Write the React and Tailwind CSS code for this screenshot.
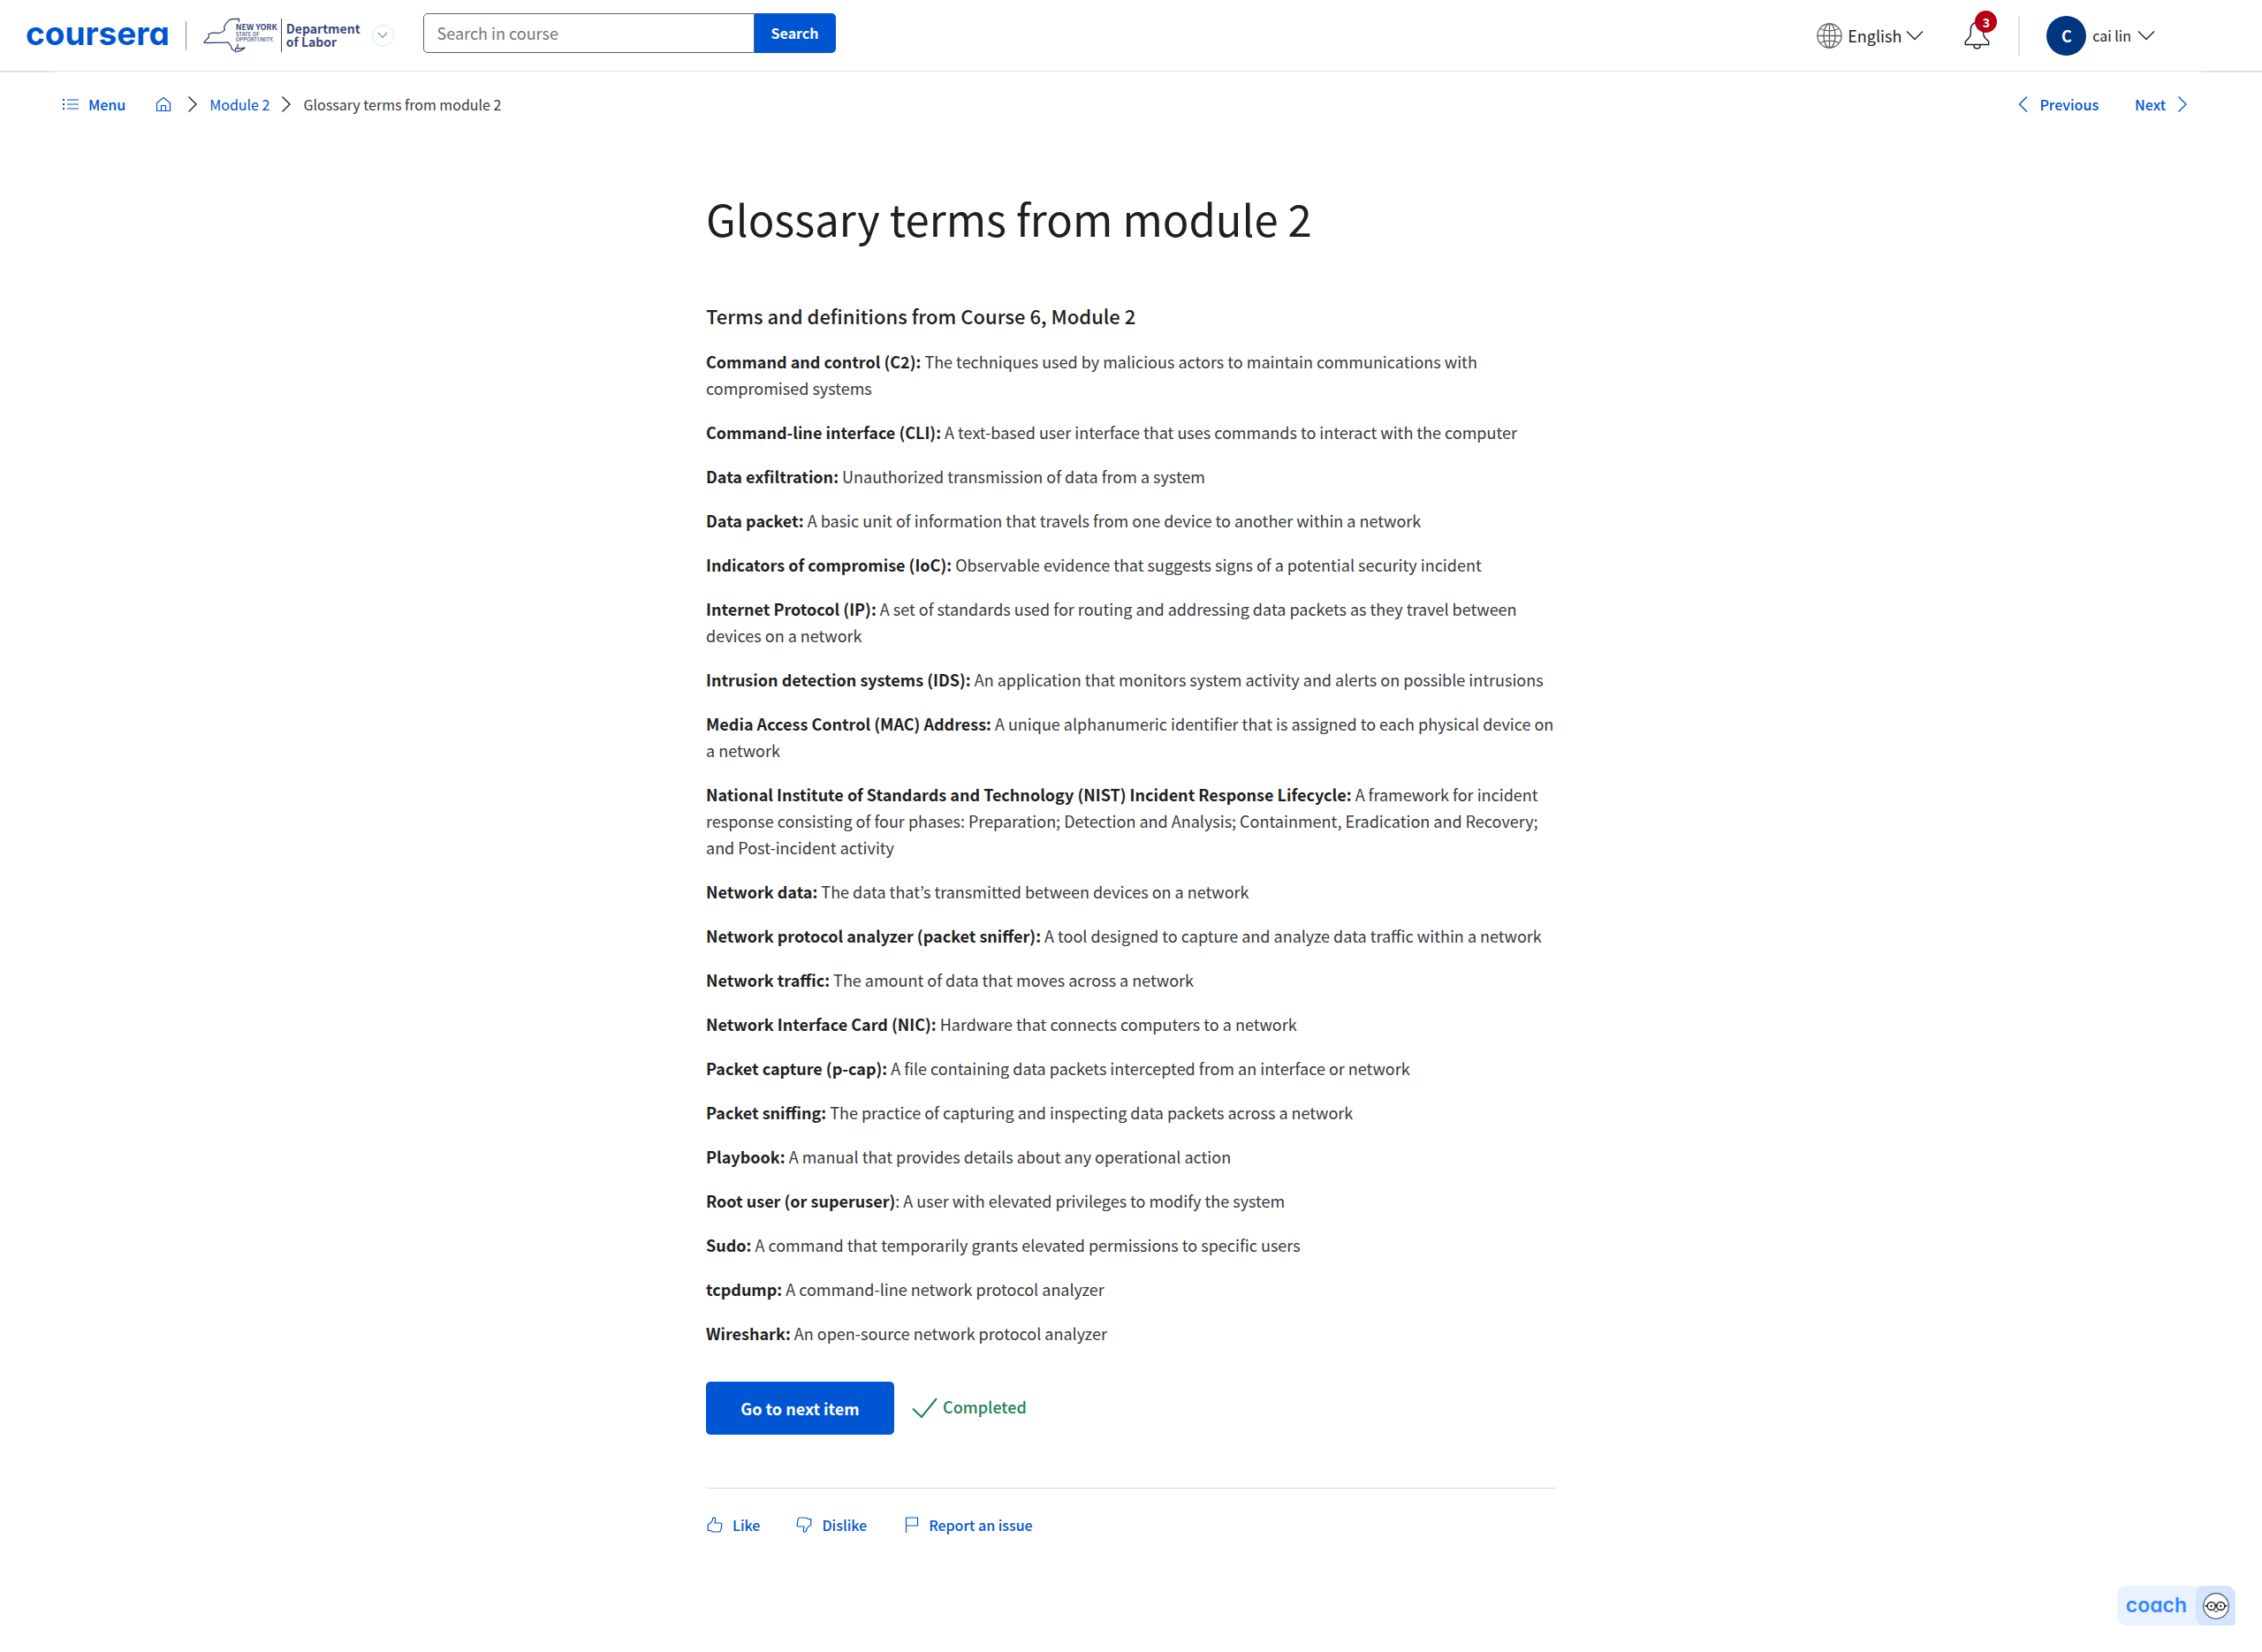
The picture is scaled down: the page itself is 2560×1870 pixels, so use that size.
const terms = [
  ["Command and control (C2):", "The techniques used by malicious actors to maintain communications with compromised systems"],
  ["Command-line interface (CLI):", "A text-based user interface that uses commands to interact with the computer"],
  ["Data exfiltration:", "Unauthorized transmission of data from a system"],
  ["Data packet:", "A basic unit of information that travels from one device to another within a network"],
  ["Indicators of compromise (IoC):", "Observable evidence that suggests signs of a potential security incident"],
  ["Internet Protocol (IP):", "A set of standards used for routing and addressing data packets as they travel between devices on a network"],
  ["Intrusion detection systems (IDS):", "An application that monitors system activity and alerts on possible intrusions"],
  ["Media Access Control (MAC) Address:", "A unique alphanumeric identifier that is assigned to each physical device on a network"],
  ["National Institute of Standards and Technology (NIST) Incident Response Lifecycle:", "A framework for incident response consisting of four phases: Preparation; Detection and Analysis; Containment, Eradication and Recovery; and Post-incident activity"],
  ["Network data:", "The data that’s transmitted between devices on a network"],
  ["Network protocol analyzer (packet sniffer):", "A tool designed to capture and analyze data traffic within a network"],
  ["Network traffic:", "The amount of data that moves across a network"],
  ["Network Interface Card (NIC):", "Hardware that connects computers to a network"],
  ["Packet capture (p-cap):", "A file containing data packets intercepted from an interface or network"],
  ["Packet sniffing:", "The practice of capturing and inspecting data packets across a network"],
  ["Playbook:", "A manual that provides details about any operational action"],
  ["Root user (or superuser)", "A user with elevated privileges to modify the system", ":"],
  ["Sudo:", "A command that temporarily grants elevated permissions to specific users"],
  ["tcpdump:", "A command-line network protocol analyzer"],
  ["Wireshark:", "An open-source network protocol analyzer"],
];

const line = { fill: "none", stroke: "currentColor" };

function ChevronRight({ className }) {
  return (
    <svg className={className} width="12" height="20" viewBox="0 0 12 20" aria-hidden="true">
      <path d="M1.500 1.500 10 10l-8.500 8.500" {...line} strokeWidth="1.400" />
    </svg>
  );
}

function ChevronLeft() {
  return (
    <svg width="12" height="20" viewBox="0 0 12 20" aria-hidden="true">
      <path d="M10 1.500 1.500 10l8.500 8.500" {...line} strokeWidth="1.400" />
    </svg>
  );
}

function ChevronDown() {
  return (
    <svg width="20" height="12" viewBox="0 0 20 12" aria-hidden="true">
      <path d="M1 1.500 10 10.500 19 1.500" {...line} strokeWidth="1.400" />
    </svg>
  );
}

function StateLogo() {
  return (
    <a href="#labor" aria-label="New York State Department of Labor" className="flex h-10 items-center text-[#3b4a78]">
      <span className="relative block h-10 w-[86px]">
        <svg className="absolute inset-0" width="86" height="40" viewBox="0 0 86 40" aria-hidden="true">
          <path
            d="M41.500 5V1.500H34l-3 .8-4 4-2.500 4.200 1 3-2.500 2.500-5 1.500-7-.3-4 1.800.5 3-4.500 4.500-1 1.500 2 .5 25-.5 3 3.500 1.500 4 3 2M40 29.500v5M37 38l1-3.500 4.500.5 6-1-5 3.300-6.500 1.500"
            {...line}
            strokeWidth="1.300"
          />
        </svg>
        <span className="absolute top-[6px] left-[38px] flex flex-col whitespace-nowrap">
          <span className="text-[9px] leading-[10px] font-bold">NEW YORK</span>
          <span className="text-[6px] leading-[6px] font-medium">STATE OF</span>
          <span className="text-[6px] leading-[6px] font-medium">OPPORTUNITY.</span>
        </span>
      </span>
      <span className="ml-[3px] h-[38px] w-px bg-[#3b4a78]" />
      <span className="ml-[5px] text-[14px] leading-[15px] font-bold">
        Department
        <br />
        of Labor
      </span>
    </a>
  );
}

function Header() {
  return (
    <header className="flex h-[81px] items-center border-b border-[#e1e1e1] pr-[121px] pl-[29px]">
      <a href="#home" className="flex h-full items-center pb-1 font-['Inter',sans-serif] text-[37px] leading-10 font-bold text-[#0056d2] [font-feature-settings:'cv11']">
        coursera
      </a>
      <span className="ml-[18px] h-[33px] w-px bg-[#8a8a8a]" />
      <div className="ml-[18px]">
        <StateLogo />
      </div>
      <button type="button" aria-label="Switch program" className="ml-[13px] flex size-[25px] items-center justify-center rounded-full border border-[#e1e1e1] text-[#0056d2]">
        <svg width="12" height="8" viewBox="0 0 12 8" aria-hidden="true">
          <path d="M1 1 6 6.500 11 1" {...line} />
        </svg>
      </button>
      <form className="mb-[5px] ml-[33px] flex h-[45px]" onSubmit={(e) => e.preventDefault()}>
        <input
          type="text"
          aria-label="Search in course"
          placeholder="Search in course"
          className="w-[375px] rounded-l-[5px] border border-[#636363] px-[15px] text-[18px] text-[#1f1f1f] placeholder:text-[#757575]"
        />
        <button type="submit" className="w-[92px] rounded-r-[5px] bg-[#0056d2] pb-0.5 text-[16px] font-bold text-white">
          Search
        </button>
      </form>

      <div className="ml-auto flex h-full items-center text-[#1f1f1f]">
        <button type="button" className="flex items-center text-[18px]">
          <svg className="text-[#636363]" width="29" height="29" viewBox="0 0 29 29" aria-hidden="true">
            <g {...line} strokeWidth="1.300">
              <circle cx="14.500" cy="14.500" r="13.600" />
              <ellipse cx="14.500" cy="14.500" rx="6.500" ry="13.600" />
              <path d="M1 14.500h27M14.500 1v27M4 6.500c3 1.700 6.500 2.400 10.500 2.400S22 8.200 25 6.500M4 22.500c3-1.700 6.500-2.400 10.500-2.400s7.500.7 10.500 2.400" />
            </g>
          </svg>
          <span className="mr-[5px] ml-1.5">English</span>
          <ChevronDown />
        </button>
        <button type="button" aria-label="Notifications, 3 unread" className="relative ml-[46px]">
          <svg width="29" height="32" viewBox="0 0 29 32" aria-hidden="true">
            <path
              d="M1.300 26.500v-3.500l4-4c1.200-1.300 2-3 2-5V9c0-4 3-7.500 7.200-7.500S21.700 5 21.700 9v5c0 2 .8 3.700 2 5l4 4v3.500ZM10.800 26.500c0 2.500 1.500 4.500 3.700 4.500s3.700-2 3.700-4.500"
              {...line}
              strokeWidth="1.400"
            />
          </svg>
          <span className="absolute -top-3 left-3 flex size-[25px] items-center justify-center rounded-full bg-[#b50015] text-[14px] leading-none font-bold text-white">
            3
          </span>
        </button>
        <span className="ml-8 h-[45px] w-0.5 bg-[#e1e1e1]" />
        <button type="button" className="ml-[30px] flex items-center text-[16px]">
          <span className="flex size-[45px] items-center justify-center rounded-full bg-[#003580] text-[18px] font-bold text-white">C</span>
          <span className="mr-[7px] ml-[7px]">cai lin</span>
          <ChevronDown />
        </button>
      </div>
    </header>
  );
}

function Breadcrumbs() {
  return (
    <div className="flex h-[72px] items-center pr-[84px] pl-[70px] text-[16px] text-[#0056d2]">
      <button type="button" className="flex items-center gap-[11px] font-medium">
        <svg width="19" height="14" viewBox="0 0 19 14" aria-hidden="true">
          <path d="M6 2h13M6 7h13M6 12h13" {...line} strokeWidth="1.200" />
          <path d="M1 1h2v2H1zM1 6h2v2H1zM1 11h2v2H1z" fill="currentColor" />
        </svg>
        Menu
      </button>
      <nav aria-label="Breadcrumb" className="ml-[34px] flex items-center">
        <a href="#course" aria-label="Course home">
          <svg width="18" height="18" viewBox="0 0 18 18" aria-hidden="true">
            <path d="M1.500 7.500 9 1.500l7.500 6v9h-15ZM6.500 16.500v-6h5v6" {...line} strokeWidth="1.200" />
          </svg>
        </a>
        <ChevronRight className="ml-[18px] text-[#1f1f1f]" />
        <a href="#module" className="ml-[13px]">Module 2</a>
        <ChevronRight className="ml-[13px] text-[#1f1f1f]" />
        <span className="ml-[13px] text-[#373a3c]">Glossary terms from module 2</span>
      </nav>
      <div className="ml-auto flex items-center gap-[41px] font-medium">
        <a href="#previous" className="flex items-center gap-[13px]">
          <ChevronLeft />
          Previous
        </a>
        <a href="#next" className="flex items-center gap-[13px]">
          Next
          <ChevronRight />
        </a>
      </div>
    </div>
  );
}

const thumb =
  "M1.300 8.500C3.500 8 5 6.500 6 4.500L6.700 2C7.200.500 9.800.500 9.700 2.500L9 7h6c1.300 0 2 .6 1.900 1.700L16 14.500c-.3 1.700-1 2.500-2.300 2.500H6.500L4.500 15.500H1.300Z";

function Article() {
  return (
    <main className="mx-auto w-[962px] max-w-full">
      <h1 className="mt-[53px] text-[49px] leading-[80px] font-normal text-[#1f1f1f]">Glossary terms from module 2</h1>
      <h2 className="mt-[55px] text-[22px] leading-[30px] font-medium text-[#1f1f1f]">Terms and definitions from Course 6, Module 2</h2>
      <div className="mt-[22px] flex flex-col gap-5 text-[18px] leading-[30px] text-[#373a3c]">
        {terms.map(([term, text, after]) => (
          <p key={term}>
            <strong className="font-bold text-[#1f1f1f]">{term}</strong>
            {after} {text}
          </p>
        ))}
      </div>
      <div className="mt-10 flex h-[60px] items-center">
        <button type="button" className="h-full w-[213px] rounded-[5px] bg-[#0056d2] text-[18px] font-bold text-white">
          Go to next item
        </button>
        <div className="ml-5 flex items-center gap-1.5 text-[18px] font-medium text-[#1f8354]">
          <svg width="29" height="24" viewBox="0 0 29 24" aria-hidden="true">
            <path d="M1 12.500 11 22 28 1" {...line} strokeWidth="2" />
          </svg>
          <span className="pb-1">Completed</span>
        </div>
      </div>
      <div className="mt-[60px] flex items-center gap-10 border-t border-[#dadcdc] pt-[29px] text-[16px] font-medium text-[#0056d2]">
        <button type="button" className="flex items-center gap-2.5">
          <svg width="20" height="18" viewBox="0 0 20 18" aria-hidden="true">
            <path d={thumb} transform="translate(1 0)" {...line} strokeWidth="1.200" />
          </svg>
          Like
        </button>
        <button type="button" className="flex items-center gap-2.5">
          <svg width="20" height="18" viewBox="0 0 20 18" aria-hidden="true">
            <path d={thumb} transform="rotate(180 9.500 9)" {...line} strokeWidth="1.200" />
          </svg>
          Dislike
        </button>
        <button type="button" className="flex items-center gap-2.5">
          <svg width="20" height="18" viewBox="0 0 20 18" aria-hidden="true">
            <path d="M4.500 18V1h13v9h-13" {...line} strokeWidth="1.200" />
          </svg>
          Report an issue
        </button>
      </div>
    </main>
  );
}

function CoachButton() {
  return (
    <button type="button" className="fixed right-[30px] bottom-[30px] flex h-[45px] items-center rounded-[10px] rounded-br-[4px] bg-[#eaf1ff] text-[#3587ff]">
      <span className="px-[10px] font-['Inter',sans-serif] text-[23px] leading-none font-semibold [font-feature-settings:'cv11']">coach</span>
      <span className="flex h-full w-[45px] items-center justify-center rounded-[10px] rounded-br-[4px] bg-[#d5e5ff]">
        <svg width="30" height="30" viewBox="0 0 30 30" aria-hidden="true">
          <circle cx="15" cy="15" r="14.300" fill="#fff" stroke="#48506a" strokeWidth="1.200" />
          <g fill="none" stroke="#1f1f1f">
            <circle cx="9.700" cy="15" r="4.600" strokeWidth="1.500" />
            <circle cx="20.300" cy="15" r="4.600" strokeWidth="1.500" />
            <path d="M13.800 14.300q1.200-.9 2.400 0M2.500 14.700h2.600M24.900 14.700h2.600" strokeWidth="1.500" />
            <path d="M12.800 20.500q2.200 2 4.400 0" />
          </g>
          <circle cx="9.700" cy="15" r="1.200" fill="#1f1f1f" />
          <circle cx="20.300" cy="15" r="1.200" fill="#1f1f1f" />
        </svg>
      </span>
    </button>
  );
}

export default function App() {
  return (
    <div className="min-h-screen bg-white font-['Noto_Sans_CJK_KR','Open_Sans',sans-serif] text-[#1f1f1f]">
      <Header />
      <div className="flex h-px justify-between">
        <span className="w-[60px] bg-[#e1e1e1]" />
        <span className="w-[67px] bg-[#e1e1e1]" />
      </div>
      <Breadcrumbs />
      <Article />
      <CoachButton />
    </div>
  );
}
